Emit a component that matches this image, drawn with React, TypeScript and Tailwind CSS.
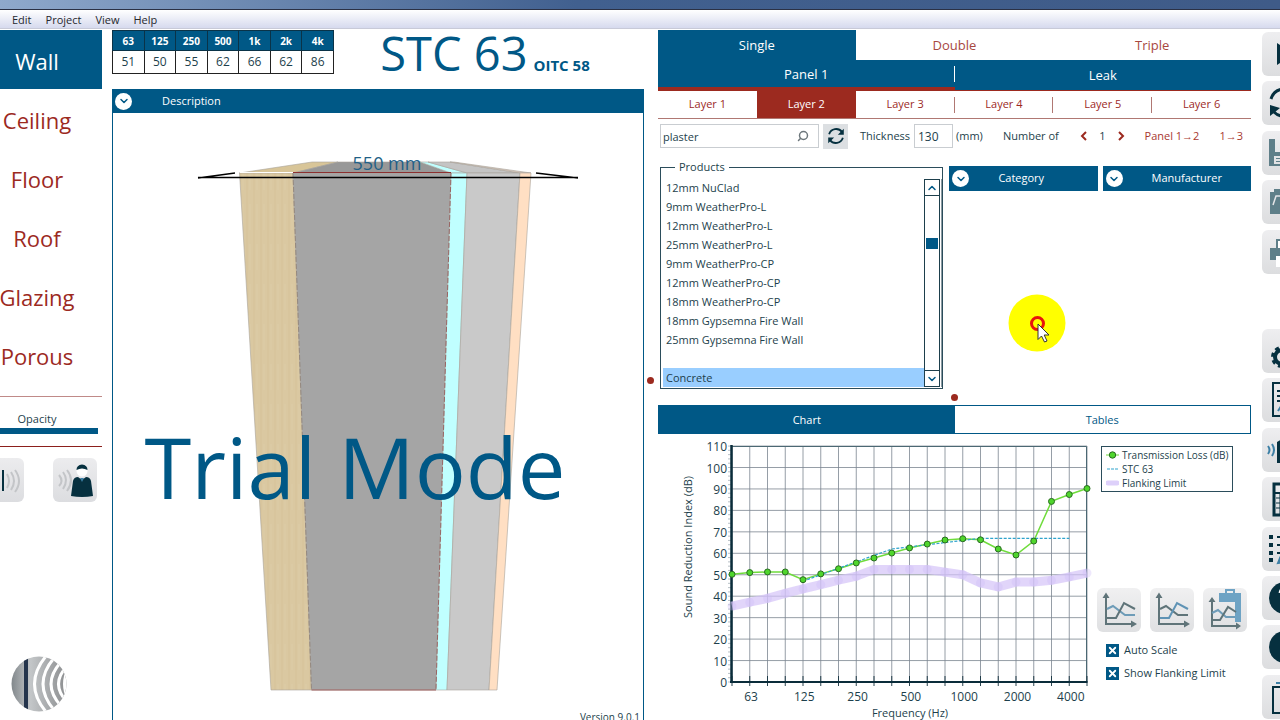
import { useState } from 'react';
import { X, ChevronDown, ChevronUp, Search } from 'lucide-react';

const bands = [
  { hz: '63', value: 51 },
  { hz: '125', value: 50 },
  { hz: '250', value: 55 },
  { hz: '500', value: 62 },
  { hz: '1k', value: 66 },
  { hz: '2k', value: 62 },
  { hz: '4k', value: 86 },
];

const elements = ['Wall', 'Ceiling', 'Floor', 'Roof', 'Glazing', 'Porous'];

const products = [
  '12mm NuClad',
  '9mm WeatherPro-L',
  '12mm WeatherPro-L',
  '25mm WeatherPro-L',
  '9mm WeatherPro-CP',
  '12mm WeatherPro-CP',
  '18mm WeatherPro-CP',
  '18mm Gypsemna Fire Wall',
  '25mm Gypsemna Fire Wall',
  '',
  'Concrete',
];

// third-octave bands from 50 Hz to 5 kHz
const transmissionLoss = [
  50.2, 51, 51.3, 51.3, 47.7, 50.4, 52.8, 55.5, 57.8, 60.1, 62.5, 64.3, 66.2,
  66.8, 66.3, 62, 59.2, 65.7, 84.2, 87.4, 90.2,
];
const flanking = [
  35.4, 37.2, 39, 41.3, 43.4, 45.4, 47.5, 49.3, 52.5, 52.5, 52.5, 52.5, 51.2,
  50, 46.2, 44.3, 46.6, 46.6, 47.4, 49, 50.8,
];
const stc = [47, 50, 53, 56, 59, 62, 63, 64, 65, 66, 67, 67, 67, 67, 67, 67];

const px = (i: number) => 732 + i * 17.75;
const py = (v: number) => 682 - v * 2.145;
const line = (values: number[], start = 0) =>
  values.map((v, i) => `${px(i + start)},${py(v)}`).join(' ');

const MenuBar = () => (
  <header>
    <div className="h-[9px] bg-linear-to-r from-[#8fa9cc] via-[#41608f] via-45% to-[#3f5b88]" />
    <nav className="flex h-5 items-center gap-[14px] border-t border-b border-t-[#2b3145] border-b-[#c8cad8] bg-linear-to-b from-white to-[#d6daee] pt-[2px] pl-3 text-[11px] text-[#26282e]">
      {['Edit', 'Project', 'View', 'Help'].map((item) => (
        <button key={item} className="leading-4">
          {item}
        </button>
      ))}
    </nav>
  </header>
);

const Logo = () => (
  <svg viewBox="0 0 56 56" className="ml-[11px] size-14" aria-label="Logo">
    <defs>
      <linearGradient id="logo" x1="0" x2="1">
        <stop offset="0" stopColor="#80868a" />
        <stop offset="0.35" stopColor="#c3c6c8" />
        <stop offset="1" stopColor="#8b8d8f" />
      </linearGradient>
      <clipPath id="logo-clip">
        <circle cx="28" cy="28" r="27.5" />
      </clipPath>
    </defs>
    <g clipPath="url(#logo-clip)">
      <rect width="56" height="56" fill="url(#logo)" />
      <rect x="13" width="4" height="56" fill="#24344c" />
      <g fill="none" stroke="#fff" strokeWidth="3">
        <path d="M35 0Q12 28 35 56" />
        <path d="M43 2Q21 28 43 54" />
        <path d="M50 6Q30 28 50 50" />
        <path d="M57 9Q38 28 57 47" />
      </g>
      <path d="M58 8Q46 28 58 48Z" fill="#fff" />
    </g>
  </svg>
);

const SideNav = () => {
  const [selected, setSelected] = useState('Wall');
  return (
    <aside className="flex w-[102px] shrink-0 flex-col overflow-hidden pt-px">
      {elements.map((name) => (
        <button
          key={name}
          onClick={() => setSelected(name)}
          className={`flex h-[59px] items-center justify-center pt-1 pr-7 text-[22px] ${
            name === selected ? 'bg-[#005886] text-white' : 'text-[#9c2a1f]'
          }`}
        >
          {name}
        </button>
      ))}
      <div className="mt-3 flex flex-col border-t border-b border-t-[#c08a88] border-b-[#8c1f1c] pt-[14px] pb-3">
        <label htmlFor="opacity" className="pr-7 text-center text-[11px] leading-4 text-[#1d3f4c]">
          Opacity
        </label>
        <input
          id="opacity"
          type="range"
          defaultValue={100}
          className="mt-px mr-1 h-[6px] appearance-none bg-[#005886] [&::-webkit-slider-thumb]:size-0 [&::-webkit-slider-thumb]:appearance-none"
        />
      </div>
      <div className="mt-[11px] -ml-5 flex gap-[29px]">
        <button aria-label="Play through wall" className="size-11 shrink-0 rounded-md bg-linear-to-b from-[#ececee] to-[#dcdde0]">
          <svg viewBox="0 0 44 44" fill="none">
            <path d="M19 12V33M23 12V33" stroke="#06303f" strokeWidth="2" />
            <path d="M27 16q4 7 0 14M31 14q6 9 0 18M35 12q8 11 0 22" stroke="#c3c5c8" strokeWidth="2" />
          </svg>
        </button>
        <button aria-label="Play to listener" className="size-11 shrink-0 rounded-md bg-linear-to-b from-[#ececee] to-[#dcdde0]">
          <svg viewBox="0 0 44 44" fill="none">
            <path d="M6 17q5 6 0 11M10 14q6 8 0 17M14 12q8 10 0 21" stroke="#c3c5c8" strokeWidth="2" />
            <circle cx="29" cy="13" r="5.500" fill="#fff" />
            <path d="M23.500 12q0-5 5.500-5.500q5.500 .5 5.500 5.500q-5.500-3-11 0z" fill="#06303f" />
            <path d="M18 38L20 23q1-4 5-4l4 3l4-3q4 0 5 4l2 15q-11 2-22 0z" fill="#06303f" />
            <path d="M27 20l2 4l2-4z" fill="#3d80a6" />
          </svg>
        </button>
      </div>
      <div className="mt-auto pb-2">
        <Logo />
      </div>
    </aside>
  );
};

const ExpandButton = ({ label }: { label: string }) => (
  <button
    aria-label={label}
    className="flex size-[17px] shrink-0 items-center justify-center rounded-full bg-white text-[#005886]"
  >
    <ChevronDown className="size-3" strokeWidth={3} />
  </button>
);

const WallDrawing = () => (
  <svg viewBox="113 113 530 607" className="block w-full">
    <defs>
      <pattern id="grain" width="7" height="40" patternUnits="userSpaceOnUse">
        <rect width="7" height="40" fill="#dac8a1" />
        <path d="M2 0V40" stroke="#d6c39a" strokeWidth="1" />
        <path d="M5 4V30" stroke="#ddcca7" strokeWidth="1" />
      </pattern>
    </defs>
    <g stroke="#a8a29a" strokeWidth="0.6">
      <path d="M239.500 173L312 162H338L293 173Z" fill="#d8c598" />
      <path d="M293 173L338 162H420L451 173Z" fill="#989898" />
      <path d="M420 162H428L467 173H451Z" fill="#c0ffff" />
      <path d="M428 162H450L520 173H467Z" fill="#c4c4c4" />
      <path d="M450 162H454L531 173H520Z" fill="#d8c8bc" />
      <path d="M239.500 173H293L311.500 690H271Z" fill="url(#grain)" />
      <path d="M293 173H451L436 690H311.500Z" fill="#a5a5a5" />
      <path d="M451 173H467L447 690H436Z" fill="#c0ffff" />
      <path d="M467 173H520L489 690H447Z" fill="#c9c9c9" />
      <path d="M520 173H531L497 690H489Z" fill="#ffdfc3" />
    </g>
    <path d="M240 172.500H293" stroke="#fff" />
    <path d="M293 172.500H451" stroke="#8c3030" />
    <path d="M311.500 690H436" stroke="#a06060" />
    <path d="M451 173L436 690" stroke="#8c4040" strokeWidth="0.7" strokeDasharray="5 2" />
    <path d="M293 173L311.500 690" stroke="#8a7a70" strokeWidth="0.7" strokeDasharray="5 2" />
    <path d="M235 173L198 178M198 177.500H578M578 178L536 173" stroke="#000" strokeWidth="1.300" fill="none" />
    <text x="387" y="170" textAnchor="middle" fontSize="18" fill="#225f86">
      550 mm
    </text>
    <text x="355" y="499" textAnchor="middle" fontSize="85" fill="#005886">
      Trial Mode
    </text>
  </svg>
);

const ModelPanel = () => (
  <main className="ml-[10px] flex min-w-0 flex-[532] flex-col">
    <div className="flex h-[60px] items-start">
      <table className="mt-px w-[222px] table-fixed border-collapse text-center text-xs text-[#1d3f4c]">
        <thead className="bg-[#005886] text-[10px] text-white">
          <tr className="h-5">
            {bands.map((b) => (
              <th key={b.hz} className="border border-[#0a3348] p-0 leading-4">
                {b.hz}
              </th>
            ))}
          </tr>
        </thead>
        <tbody>
          <tr className="h-[23px]">
            {bands.map((b) => (
              <td key={b.hz} className="border border-[#222] p-0 leading-4">
                {b.value}
              </td>
            ))}
          </tr>
        </tbody>
      </table>
      <div className="flex flex-1 items-baseline justify-center gap-[6px] pr-2 whitespace-nowrap text-[#005886]">
        <span className="text-[47px] leading-[48px]">STC 63</span>
        <span className="text-[15px] font-bold">OITC 58</span>
      </div>
    </div>
    <section className="flex flex-1 flex-col overflow-hidden border-x border-[#005886]">
      <div className="flex h-6 shrink-0 items-center gap-[30px] bg-[#005886] pl-[2px] text-[11px] text-white">
        <ExpandButton label="Expand description" />
        <h2>Description</h2>
      </div>
      <div className="relative flex-1">
        <WallDrawing />
        <span className="absolute right-[3px] -bottom-[5px] text-[10px] leading-4 text-[#1d3f4c]">
          Version 9.0.1
        </span>
      </div>
    </section>
  </main>
);

const RefreshIcon = ({ className }: { className?: string }) => (
  <svg viewBox="0 0 24 24" className={className} fill="none" stroke="#06303f" strokeWidth="2">
    <path d="M4.500 10A8 8 0 0 1 18.500 7.500M19.500 14A8 8 0 0 1 5.500 16.500" />
    <path d="M20.500 4V10.500H14ZM3.500 20V13.500H10Z" fill="#06303f" stroke="none" />
  </svg>
);

const ConstructionTabs = () => {
  const [layer, setLayer] = useState(2);
  return (
    <div className="mt-px">
      <div className="grid h-[30px] grid-cols-3 text-[13px]">
        <button className="bg-[#005886] pt-[2px] text-white">Single</button>
        <button className="pt-[2px] text-[#a8483f]">Double</button>
        <button className="pt-[2px] text-[#a8483f]">Triple</button>
      </div>
      <div className="grid h-[31px] grid-cols-2 border-b border-[#9c2a1f] bg-[#005886] text-[13px] text-white">
        <button className="relative border-b-[3px] border-[#9c2a1f] pt-[3px]">
          Panel 1
          <span className="absolute top-[6px] right-0 h-4 w-px bg-white" />
        </button>
        <button className="pt-px">Leak</button>
      </div>
      <div className="grid h-7 grid-cols-6 border-b border-[#b07873] text-[11px]">
        {[1, 2, 3, 4, 5, 6].map((n) => (
          <button
            key={n}
            onClick={() => setLayer(n)}
            className={`relative ${n === layer ? 'bg-[#9c2a1f] text-white' : 'text-[#9c2a1f]'}`}
          >
            Layer {n}
            {n > 2 && n < 6 && (
              <span className="absolute top-[6px] right-0 h-4 w-px bg-[#b07873]" />
            )}
          </button>
        ))}
      </div>
    </div>
  );
};

const LayerToolbar = () => (
  <div className="mt-[5px] flex h-6 items-center pl-[2px] text-[11px] whitespace-nowrap text-[#1d3f4c]">
    <div className="relative">
      <input
        aria-label="Search products"
        defaultValue="plaster"
        className="h-6 w-[159px] border border-[#c9cdd1] pl-[2px] outline-none"
      />
      <Search className="absolute top-[6px] right-[10px] size-3 -scale-x-100 text-[#6d777c]" strokeWidth={3} />
    </div>
    <button aria-label="Refresh" className="ml-1 flex size-[25px] items-center justify-center bg-[#dcdfe2]">
      <RefreshIcon className="size-[22px]" />
    </button>
    <label htmlFor="thickness" className="ml-3 w-[54px]">
      Thickness
    </label>
    <input
      id="thickness"
      defaultValue="130"
      className="h-6 w-[39px] border border-[#c9cdd1] pl-[3px] text-xs outline-none"
    />
    <span className="ml-[3px] w-[47px]">(mm)</span>
    <span className="w-[72px]">Number of</span>
    <button aria-label="Decrease" className="ml-1 text-[#9c2a1f]">
      <svg viewBox="0 0 10 10" className="size-[10px]" fill="none" stroke="currentColor" strokeWidth="2">
        <path d="M7 1L3 5L7 9" />
      </svg>
    </button>
    <span className="w-[27px] text-center">1</span>
    <button aria-label="Increase" className="text-[#9c2a1f]">
      <svg viewBox="0 0 10 10" className="size-[10px]" fill="none" stroke="currentColor" strokeWidth="2">
        <path d="M3 1L7 5L3 9" />
      </svg>
    </button>
    <button className="ml-auto text-[#a8382f]">Panel 1→2</button>
    <button className="mr-2 ml-5 text-[#a8382f]">1→3</button>
  </div>
);

const ProductList = () => {
  const [selected, setSelected] = useState('Concrete');
  return (
    <fieldset className="ml-[2px] w-[283px] shrink-0 border border-[#2b4d5b] pt-1 pb-px pl-[2px] text-[11px] text-[#1d3f4c]">
      <legend className="ml-3 px-1 leading-4">Products</legend>
      <div className="flex h-[208px] border-r border-[#8a9aa2] pr-px">
        <ul className="flex flex-1 flex-col">
          {products.map((name, i) => (
            <li key={i} className="flex flex-1">
              <button
                onClick={() => setSelected(name)}
                className={`w-full pl-[3px] text-left leading-4 ${name === selected ? 'bg-[#99ceff]' : ''}`}
              >
                {name}
              </button>
            </li>
          ))}
        </ul>
        <div className="flex w-4 flex-col border border-[#1d3f4c] text-[#005886]">
          <button aria-label="Scroll up" className="flex h-4 items-center justify-center border-b border-[#1d3f4c]">
            <ChevronUp className="size-3" strokeWidth={3} />
          </button>
          <div className="flex-1 px-px pt-[42px]">
            <div className="h-[11px] bg-[#005886]" />
          </div>
          <button aria-label="Scroll down" className="flex h-4 items-center justify-center border-t border-[#1d3f4c]">
            <ChevronDown className="size-3" strokeWidth={3} />
          </button>
        </div>
      </div>
    </fieldset>
  );
};

const FilterHeader = ({ title, className }: { title: string; className?: string }) => (
  <div className="flex h-[25px] flex-1 items-center bg-[#005886] pl-[3px] text-[11px] text-white">
    <ExpandButton label={`Expand ${title.toLowerCase()}`} />
    <h3 className={`flex-1 text-center ${className ?? ''}`}>{title}</h3>
  </div>
);

const ClickMarker = () => (
  <svg viewBox="0 0 58 58" className="absolute top-[128px] left-[59px] size-[58px]">
    <circle cx="29" cy="29" r="28.500" fill="#ff0" />
    <circle cx="29.500" cy="29.500" r="6" fill="none" stroke="#e8140c" strokeWidth="3" />
    <path d="M30 30V45.500L33.500 42L36.500 48L39 47L36.200 41H41Z" fill="#fff" stroke="#333" />
  </svg>
);

const Chart = () => (
  <svg viewBox="658 434 440 286" className="w-[440px] shrink-0 text-[#1d3f4c]" fill="currentColor">
    <g stroke="#7b8590" strokeWidth="0.800">
      {transmissionLoss.map((_, i) => (
        <path key={i} d={`M${px(i)} 446V682`} />
      ))}
      {[...Array(12)].map((_, i) => (
        <path key={i} d={`M732 ${py(i * 10)}H1087`} />
      ))}
    </g>
    <path d="M732 446.500H1086.500V682" fill="none" stroke="#4b6873" />
    {[...Array(56)].map((_, i) => (
      <path key={i} d={`M728 ${py(i * 2)}H731`} stroke="#8796a0" strokeWidth="0.600" />
    ))}
    {transmissionLoss.map((_, i) => (
      <path key={i} d={`M${px(i)} 676V686`} stroke="#12303d" strokeWidth="0.900" />
    ))}
    <path d="M731.500 445V683" stroke="#0a2c3a" strokeWidth="2.500" />
    <path d="M730 682H1087.500" stroke="#0a2c3a" strokeWidth="2" />
    <polyline points={line(flanking)} fill="none" stroke="#d4c3f8" strokeOpacity="0.700" strokeWidth="9" />
    {flanking.map((v, i) => (
      <circle key={i} cx={px(i)} cy={py(v)} r="4.500" fill="#cdbdf6" fillOpacity="0.350" />
    ))}
    <polyline points={line(transmissionLoss)} fill="none" stroke="#6fdc3c" strokeWidth="1.500" />
    <polyline points={line(stc, 4)} fill="none" stroke="#2fa3cc" strokeWidth="1.200" strokeDasharray="3 1.500" />
    {transmissionLoss.map((v, i) => (
      <circle key={i} cx={px(i)} cy={py(v)} r="3" fill="#4fd62c" stroke="#2a6b22" />
    ))}
    {[...Array(12)].map((_, i) => (
      <text key={i} x="727" y={py(i * 10) + 5} textAnchor="end" fontSize="12">
        {i * 10}
      </text>
    ))}
    {['63', '125', '250', '500', '1000', '2000', '4000'].map((hz, i) => (
      <text key={hz} x={751 + i * 53.300} y="701" textAnchor="middle" fontSize="12">
        {hz}
      </text>
    ))}
    <text x="910" y="717" textAnchor="middle" fontSize="11">
      Frequency (Hz)
    </text>
    <text transform="translate(692 547) rotate(-90)" textAnchor="middle" fontSize="11">
      Sound Reduction Index (dB)
    </text>
  </svg>
);

const Legend = () => (
  <ul className="w-[132px] border border-[#2b4d5b] py-px pl-1 text-[10px] leading-[14px] whitespace-nowrap text-[#1d3f4c]">
    <li className="flex items-center gap-[3px]">
      <svg viewBox="0 0 13 8" className="w-[13px] shrink-0">
        <path d="M0 4H13" stroke="#6fdc3c" />
        <circle cx="6.500" cy="4" r="3.200" fill="#4fd62c" stroke="#2a6b22" />
      </svg>
      Transmission Loss (dB)
    </li>
    <li className="flex items-center gap-[3px]">
      <svg viewBox="0 0 13 8" className="w-[13px] shrink-0">
        <path d="M1 4H12" stroke="#2fa3cc" strokeDasharray="3 1" />
      </svg>
      STC 63
    </li>
    <li className="flex items-center gap-[3px]">
      <svg viewBox="0 0 13 8" className="w-[13px] shrink-0">
        <path d="M2 4H11" stroke="#ddd0fa" strokeWidth="5" strokeLinecap="round" />
      </svg>
      Flanking Limit
    </li>
  </ul>
);

const CheckOption = ({ label }: { label: string }) => (
  <label className="relative flex items-center gap-[5px] text-[11px] leading-4 whitespace-nowrap text-[#1d3f4c]">
    <input
      type="checkbox"
      defaultChecked
      className="peer size-[13px] appearance-none border border-[#005886] checked:bg-[#005886]"
    />
    <X className="pointer-events-none absolute left-0 hidden size-[13px] p-px text-white peer-checked:block" strokeWidth={4} />
    {label}
  </label>
);

const ChartButton = ({ label, variant }: { label: string; variant: 'blue' | 'dark' | 'clip' }) => {
  const flat = variant === 'blue' ? '#6e9cb8' : '#5f7479';
  const steep = variant === 'blue' ? '#5f7479' : '#5f93b5';
  return (
    <button aria-label={label} className="size-11 rounded-md bg-linear-to-b from-[#f0f0f1] to-[#dfe0e2]">
      <svg viewBox="0 0 44 44" fill="none" strokeWidth="2">
        {variant === 'clip' ? (
          <>
            <path d="M9 12V38H35" stroke="#5f7479" />
            <path d="M5.500 14L9 9L12.500 14ZM33 34.500L38 38L33 41.500Z" fill="#5f7479" />
            <path d="M16 5H38V34H32V14H16Z" fill="#6ea3c4" />
            <path d="M23 6V2H31V6" stroke="#6ea3c4" />
            <path d="M9 25L15 22L23 29H32" stroke="#6e9cb8" />
            <path d="M9 32H17L25 19L33 24" stroke="#5f7479" />
          </>
        ) : (
          <>
            <path d="M9 8V36H35" stroke="#5f7479" />
            <path d="M5.500 10L9 4.500L12.500 10ZM34 32.500L40 36L34 39.500Z" fill="#5f7479" />
            <path d="M10 21L16 18L28 27H38" stroke={flat} />
            <path d="M10 30H19L27 15L38 21" stroke={steep} />
          </>
        )}
      </svg>
    </button>
  );
};

const DesignPanel = () => (
  <section className="relative ml-[14px] flex min-w-0 flex-[593] flex-col">
    <ConstructionTabs />
    <LayerToolbar />
    <div className="mt-[11px] flex gap-[6px]">
      <ProductList />
      <div className="relative mt-[7px] flex flex-1 items-start gap-[5px]">
        <FilterHeader title="Category" className="pr-6" />
        <FilterHeader title="Manufacturer" />
        <ClickMarker />
        <span className="absolute top-[228px] left-[2px] size-[7px] rounded-full bg-[#9c2a1f]" />
      </div>
      <span className="absolute top-[348px] -left-[11px] size-[7px] rounded-full bg-[#9c2a1f]" />
    </div>
    <div className="mt-4 grid h-[29px] shrink-0 grid-cols-2 border border-[#005886] text-[11px]">
      <button className="bg-[#005886] pt-px text-white">Chart</button>
      <button className="pt-px text-[#005886]">Tables</button>
    </div>
    <div className="flex flex-1">
      <Chart />
      <div className="flex flex-1 flex-col pt-3 pb-[39px]">
        <div className="pl-[3px]">
          <Legend />
        </div>
        <div className="mt-auto -ml-px flex gap-[9px]">
          <ChartButton label="Copy transmission loss" variant="blue" />
          <ChartButton label="Copy curve" variant="dark" />
          <ChartButton label="Paste curve" variant="clip" />
        </div>
        <div className="mt-[10px] flex flex-col gap-[7px] pl-2">
          <CheckOption label="Auto Scale" />
          <CheckOption label="Show Flanking Limit" />
        </div>
      </div>
    </div>
  </section>
);

const dark = '#06303f';
const faded = '#5f7f89';

const tools = [
  { label: 'Play', art: <path d="M15 11L32 22L15 33Z" fill={dark} /> },
  {
    label: 'Recalculate',
    art: (
      <g fill="none" stroke={dark} strokeWidth="3">
        <path d="M9 18A14 14 0 0 1 34 14M35 26A14 14 0 0 1 12 31" />
        <path d="M8 24L18 27L8 35Z" fill={dark} stroke="none" />
      </g>
    ),
  },
  {
    label: 'Save',
    art: <path d="M7 8H13V21H30V8H36V35H7ZM12 25V33H31V25ZM14 27H29V28H14ZM14 30H29V31H14Z" fill={faded} fillRule="evenodd" />,
  },
  {
    label: 'Open',
    art: (
      <>
        <path d="M8 12H12V9H24V12H36V34H8Z" fill={faded} />
        <path d="M11 25L14 16H18" stroke="#e4e5e7" strokeWidth="1.500" fill="none" />
      </>
    ),
  },
  {
    label: 'Print',
    art: (
      <>
        <path d="M8 18H14V9H30V18H36V30H8Z" fill={faded} />
        <path d="M16 11H28V18H16ZM14 26H30V37H14Z" fill="#fff" />
      </>
    ),
  },
  null,
  {
    label: 'Settings',
    art: (
      <g fill="none" stroke={dark}>
        <circle cx="20" cy="28" r="7" strokeWidth="4" />
        <circle cx="20" cy="28" r="9.500" strokeWidth="3" strokeDasharray="4 3.460" />
      </g>
    ),
  },
  {
    label: 'Report',
    art: (
      <g fill="none" stroke={dark} strokeWidth="2">
        <path d="M11 5H34V38H11Z" />
        <path d="M15 13H30M15 18H30M15 23H30" />
        <path d="M16 33L21 25" stroke="#3d80a6" />
      </g>
    ),
  },
  {
    label: 'Sound insulation',
    art: (
      <>
        <path d="M15 35V14L26 8L38 14V35Z" fill={dark} />
        <path d="M6 18q3 4 0 8M10 16q4 6 0 12" fill="none" stroke="#3d80a6" strokeWidth="2" />
      </>
    ),
  },
  {
    label: 'Calculator',
    art: (
      <g fill="none" stroke={dark}>
        <path d="M12 7H34V38H12Z" strokeWidth="3" />
        <path d="M13 16H33" strokeWidth="2" />
        <path d="M14 21H33M14 26H33M14 31H33M18 16V37M25 16V37" strokeWidth="1" />
      </g>
    ),
  },
  {
    label: 'Edit list',
    art: (
      <g stroke={dark} strokeWidth="2">
        <path d="M15 10H36M15 18H36M15 26H36" />
        <path d="M7 10H11M7 18H11M7 26H11M7 33H11" strokeWidth="4" />
        <path d="M16 36L18 31L22 35Z" fill="#3d80a6" stroke="#3d80a6" />
      </g>
    ),
  },
  {
    label: 'Help',
    art: (
      <>
        <circle cx="23" cy="22" r="16" fill={dark} />
        <path d="M18 17q1-5 5-5q6 0 5 5q-1 3-5 6v3" fill="none" stroke="#fff" strokeWidth="3" />
      </>
    ),
  },
  {
    label: 'Information',
    art: (
      <>
        <circle cx="23" cy="22" r="16" fill={dark} />
        <path d="M23 19V31M23 12V16" stroke="#fff" strokeWidth="4" />
      </>
    ),
  },
  {
    label: 'Windows',
    art: (
      <g fill="none" stroke={dark} strokeWidth="2">
        <path d="M11 12H34V38H11Z" />
        <path d="M14 8H38V32" stroke="#3d80a6" />
      </g>
    ),
  },
];

const ToolStrip = () => (
  <aside className="ml-[11px] flex w-[18px] shrink-0 flex-col justify-between overflow-hidden pt-[3px] pb-px">
    {tools.map((tool, i) =>
      tool ? (
        <button
          key={tool.label}
          aria-label={tool.label}
          className="size-11 shrink-0 rounded-md bg-linear-to-b from-[#eeeef0] to-[#dcdddf]"
        >
          <svg viewBox="0 0 44 44">{tool.art}</svg>
        </button>
      ) : (
        <div key={i} className="h-11" />
      ),
    )}
  </aside>
);

const App: React.FC = () => {
  return (
    <div className="flex h-screen flex-col overflow-hidden bg-white font-['Open_Sans','Noto_Sans',sans-serif]">
      <MenuBar />
      <div className="flex min-h-0 flex-1">
        <SideNav />
        <ModelPanel />
        <DesignPanel />
        <ToolStrip />
      </div>
    </div>
  );
};

export default App;
